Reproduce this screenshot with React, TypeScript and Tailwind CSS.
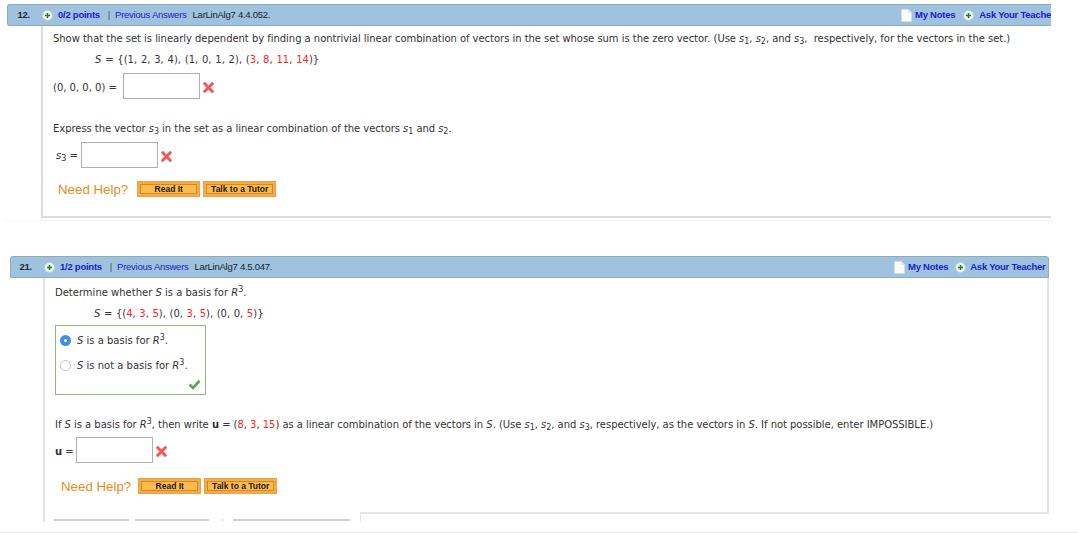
import React from "react";

const Plus = () => (
  <svg width="11" height="11" viewBox="0 0 11 11" className="shrink-0 block">
    <circle cx="5.5" cy="5.5" r="5" fill="#f4f6f4" stroke="#c4ccd2" strokeWidth="0.8" />
    <path d="M5.5 3v5M3 5.5h5" stroke="#0f8a1c" strokeWidth="1.6" />
  </svg>
);

const Note = () => (
  <svg width="11" height="13" viewBox="0 0 11 13" className="shrink-0 block">
    <path d="M0.5 0.5H7.5L10.5 3.5V12.5H0.5Z" fill="#fbfbf8" stroke="#d6dde2" strokeWidth="0.6" />
    <path d="M7.5 0.5V3.5H10.5" fill="#e4e7e6" stroke="#d6dde2" strokeWidth="0.5" />
  </svg>
);

const Cross = () => (
  <svg width="11" height="11" viewBox="0 0 11 11" className="shrink-0 block">
    <path d="M1.8 1.8L9.2 9.2M9.2 1.8L1.8 9.2" stroke="#ee5a5a" strokeWidth="3" strokeLinecap="square" />
  </svg>
);

const Check = () => (
  <svg width="13" height="11" viewBox="0 0 13 11" className="block">
    <path d="M1.5 5.5L5 9L11.5 1.8" fill="none" stroke="#62a55c" strokeWidth="2.8" />
  </svg>
);

const R = ({ children }: { children: React.ReactNode }) => <span className="text-[#f22]">{children}</span>;
const I = ({ children }: { children: React.ReactNode }) => <i>{children}</i>;
const Sub = ({ children }: { children: React.ReactNode }) => (
  <span>
    <i>s</i>
    <sub className="text-[8px] leading-none not-italic align-[-2px] bottom-0">{children}</sub>
  </span>
);
const Cube = () => <sup className="text-[8px] leading-none align-[4px] top-0">3</sup>;

const Input = () => <div className="w-[77px] h-[26px] border border-[#b0b0b0] bg-white shrink-0 shadow-[inset_0_0_1px_#ddd]" />;

const Btn = ({ w, children }: { w: string; children: React.ReactNode }) => (
  <div className={`${w} h-4 border border-[#eda04a] bg-[#f6ab45] p-[2px]`}>
    <div className="h-full flex items-center justify-center whitespace-nowrap bg-[#fdbb4c] border border-[#d08a2c] text-[8.5px] font-bold text-[#1a1a1a] leading-none">
      {children}
    </div>
  </div>
);

const Help = ({ gap }: { gap: string }) => (
  <div className="flex items-center h-4 font-['Liberation_Sans',Arial,sans-serif]">
    <span className="text-[13.3px] mt-[1px] text-[#ec8a1c] leading-none whitespace-nowrap">Need Help?</span>
    <div className={`flex gap-[3px] ${gap}`}>
      <Btn w="w-[63px]">Read It</Btn>
      <Btn w="w-[73px]">Talk to a Tutor</Btn>
    </div>
  </div>
);

const Header = ({
  num,
  pts,
  code,
  numW,
  leftW,
  notesGap,
  askGap,
  rounded,
}: {
  num: string;
  pts: string;
  code: string;
  numW: string;
  leftW: string;
  notesGap: string;
  askGap: string;
  rounded: string;
}) => (
  <div
    className={`h-[22px] bg-[#9fc2de] border-t border-b border-[#8fa9bd] ${rounded} flex items-center overflow-hidden pt-[1px] text-[9.5px] tracking-[-0.25px] font-['Liberation_Sans',Arial,sans-serif] whitespace-nowrap`}
  >
    <div className={`${leftW} shrink-0 flex items-center`}>
      <span className={`${numW} shrink-0 font-bold text-[#1b2733] text-right`}>{num}</span>
      <span className="ml-[12px]">
        <Plus />
      </span>
      <span className="ml-[5px] font-bold text-[#1c1ccb]">{pts}</span>
      <span className="ml-[8px] text-[#44586a]">|</span>
      <span className="ml-[5px] text-[#1c1ccb]">Previous Answers</span>
      <span className="ml-[6px] text-[#18222c]">{code}</span>
    </div>
    <div className="flex items-center shrink-0 font-bold text-[#1c1ccb]">
      <Note />
      <span className="ml-[3px]">My Notes</span>
      <span className={notesGap}>
        <Plus />
      </span>
      <span className={askGap}>Ask Your Teacher</span>
    </div>
  </div>
);

const Line = ({ cls, children }: { cls: string; children: React.ReactNode }) => (
  <div className={`flex items-center h-4 whitespace-pre ${cls}`}>
    <span>{children}</span>
  </div>
);

export default function App() {
  return (
    <div className="relative w-[1078px] h-[533px] overflow-hidden bg-white text-[10px] text-[#333] font-['DejaVu_Sans',Verdana,sans-serif]">
      <div className="pt-1 pl-[7px] w-[1051px]">
        <Header num="12." pts="0/2 points" code="LarLinAlg7 4.4.052." numW="w-[22px]" leftW="w-[893px]" notesGap="ml-[8px]" askGap="ml-[5px]" rounded="rounded-l-[3px] border-l border-[#8fa9bd]" />
        <div className="ml-[34px] h-[192px] border-l-2 border-b-2 border-[#dcdcdc] pl-[10px] pt-1">
          <Line cls="tracking-[-0.035px]">
            Show that the set is linearly dependent by finding a nontrivial linear combination of vectors in the set whose sum is the zero vector. (Use <Sub>1</Sub>, <Sub>2</Sub>, and <Sub>3</Sub>,  respectively, for the vectors in the set.)
          </Line>
          <Line cls="mt-[5px] ml-[42px] [word-spacing:0.6px]">
            <I>S</I> = {"{"}(1, 2, 3, 4), (1, 0, 1, 2), (<R>3</R>, <R>8</R>, <R>11</R>, <R>14</R>){"}"}
          </Line>
          <div className="flex items-center mt-[6px]">
            <span className="w-[70px] whitespace-pre mt-[2px]">(0, 0, 0, 0) =</span>
            <Input />
            <span className="ml-[3px] mt-[3px]"><Cross /></span>
          </div>
          <Line cls="mt-[21px] tracking-[-0.05px]">
            Express the vector <Sub>3</Sub> in the set as a linear combination of the vectors <Sub>1</Sub> and <Sub>2</Sub>.
          </Line>
          <div className="flex items-center mt-[6px]">
            <span className="w-[28px] pl-[3px] whitespace-pre"><Sub>3</Sub> =</span>
            <Input />
            <span className="ml-[3px] mt-[3px]"><Cross /></span>
          </div>
          <div className="mt-[13px] ml-[5px]">
            <Help gap="ml-[9px]" />
          </div>
        </div>
        <div className="h-px bg-[#f4f4f4] -ml-[3px] mt-[2px]" />
      </div>

      <div className="mt-[35px] ml-[10px] w-[1039px]">
        <Header num="21." pts="1/2 points" code="LarLinAlg7 4.5.047." numW="w-[21px]" leftW="w-[883px]" notesGap="ml-[7px]" askGap="ml-[4px]" rounded="rounded-[3px] rounded-b-none border-l border-r border-[#8fa9bd]" />
        <div className="ml-[33px] h-[244px] border-l-2 border-[#e4e4e4]">
          <div className="h-[236px] border-r-2 border-[#e4e4e4] pl-[10px]">
            <Line cls="pt-[6px] h-[22px]">
              Determine whether <I>S</I> is a basis for <I>R</I><Cube />.
            </Line>
            <Line cls="mt-[5px] ml-[39px] [word-spacing:0.4px]">
              <I>S</I> = {"{"}(<R>4</R>, <R>3</R>, <R>5</R>), (0, <R>3</R>, <R>5</R>), (0, 0, <R>5</R>){"}"}
            </Line>
            <div className="mt-[4px] w-[151px] h-[70px] border border-[#8dbb74] pl-[4px] pt-[6px] relative">
              <div className="flex items-center h-4 gap-[6px]">
                <div className="w-[11px] h-[11px] rounded-full bg-[#3f8fe6] flex items-center justify-center">
                  <div className="w-[3px] h-[3px] rounded-full bg-white" />
                </div>
                <span className="whitespace-pre"><I>S</I> is a basis for <I>R</I><Cube />.</span>
              </div>
              <div className="flex items-center h-4 gap-[6px] mt-[9px]">
                <div className="w-[11px] h-[11px] rounded-full border border-[#c4c4c4] bg-white" />
                <span className="whitespace-pre"><I>S</I> is not a basis for <I>R</I><Cube />.</span>
              </div>
              <div className="absolute right-[4px] bottom-[4px]"><Check /></div>
            </div>
            <Line cls="mt-[21px] tracking-[-0.035px]">
              If <I>S</I> is a basis for <I>R</I><Cube />, then write <b>u</b> = (<R>8</R>, <R>3</R>, <R>15</R>) as a linear combination of the vectors in <I>S</I>. (Use <Sub>1</Sub>, <Sub>2</Sub>, and <Sub>3</Sub>, respectively, as the vectors in <I>S</I>. If not possible, enter IMPOSSIBLE.)
            </Line>
            <div className="flex items-center mt-[5px]">
              <span className="w-[21px] whitespace-pre mt-[3px]"><b>u</b> =</span>
              <Input />
              <span className="ml-[3px] mt-[3px]"><Cross /></span>
            </div>
            <div className="mt-[15px] ml-[6px]">
              <Help gap="ml-[7px]" />
            </div>
            <div className="flex mt-[25px] -ml-[1px]">
              <div className="w-[75px] h-[2px] bg-[#cfcfcf]" />
              <div className="w-[74px] h-[2px] ml-[6px] bg-[#cfcfcf]" />
              <div className="w-[1px] h-[2px] ml-[13px] bg-[#cfcfcf]" />
              <div className="w-[117px] h-[2px] ml-[10px] bg-[#cfcfcf]" />
            </div>
          </div>
          <div className="ml-[315px] h-[10px] border-t-2 border-l border-[#e6e6e6] -mt-[2px]" />
        </div>
      </div>

      <div className="absolute left-0 right-0 top-[522px] bottom-0 bg-white border-b border-[#e8e8e8]" />
    </div>
  );
}
